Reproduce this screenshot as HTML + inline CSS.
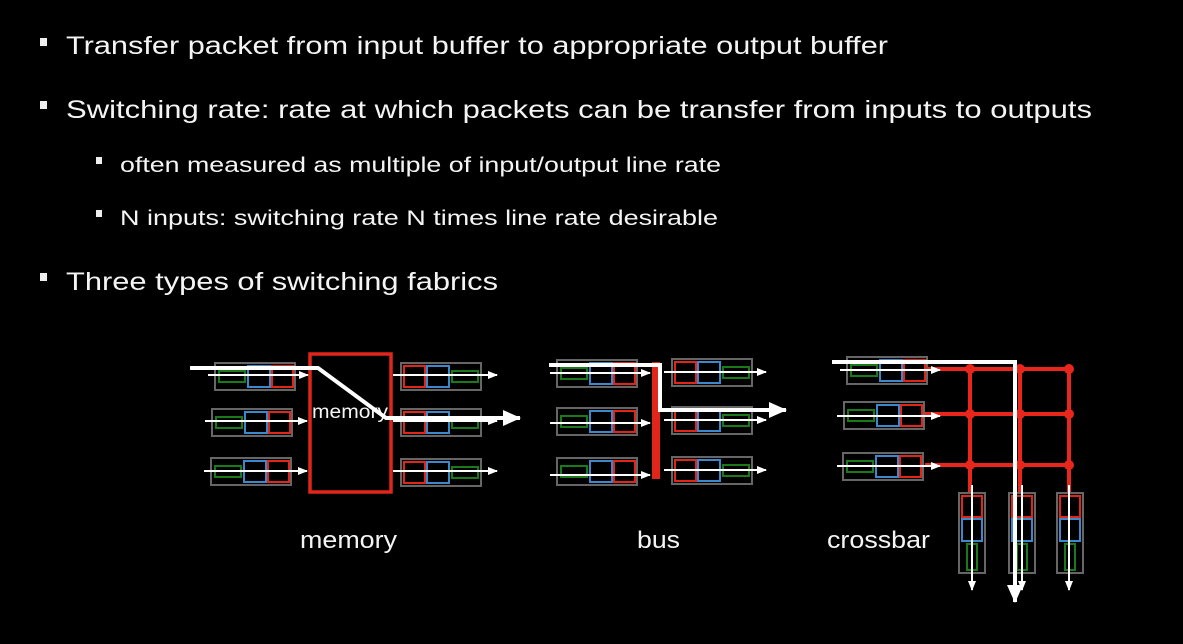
<!DOCTYPE html>
<html><head><meta charset="utf-8"><style>
html,body{margin:0;padding:0;background:#000;}
svg{display:block}
text{font-family:"Liberation Sans",sans-serif;fill:#f4f4f4}
</style></head><body>
<svg width="1183" height="644" viewBox="0 0 1183 644" xmlns="http://www.w3.org/2000/svg">
<defs>
<marker id="a" markerWidth="10" markerHeight="10" refX="9" refY="5" orient="auto" markerUnits="userSpaceOnUse"><path d="M0,1 L10,5 L0,9 Z" fill="#fff"/></marker>
<marker id="A" markerWidth="18" markerHeight="18" refX="17" refY="9" orient="auto" markerUnits="userSpaceOnUse"><path d="M0,1 L18,9 L0,17 Z" fill="#fff"/></marker>
<g id="qin">
<rect x="0" y="0" width="80" height="27" fill="none" stroke="#666" stroke-width="2"/>
<rect x="4" y="8" width="26" height="11" fill="none" stroke="#1a7a1a" stroke-width="2"/>
<rect x="33" y="3" width="22" height="21" fill="none" stroke="#3c88cc" stroke-width="2"/>
<rect x="57" y="3" width="21" height="21" fill="none" stroke="#e0261b" stroke-width="2"/>
</g>
<g id="qout">
<rect x="0" y="0" width="80" height="27" fill="none" stroke="#666" stroke-width="2"/>
<rect x="3" y="3" width="21" height="21" fill="none" stroke="#e0261b" stroke-width="2"/>
<rect x="26" y="3" width="22" height="21" fill="none" stroke="#3c88cc" stroke-width="2"/>
<rect x="51" y="8" width="26" height="11" fill="none" stroke="#1a7a1a" stroke-width="2"/>
</g>
<g id="qv">
<rect x="0" y="0" width="26" height="80" fill="none" stroke="#666" stroke-width="2"/>
<rect x="3" y="3" width="20" height="21" fill="none" stroke="#e0261b" stroke-width="2"/>
<rect x="3" y="26" width="20" height="22" fill="none" stroke="#3c88cc" stroke-width="2"/>
<rect x="8" y="51" width="10" height="26" fill="none" stroke="#1a7a1a" stroke-width="2"/>
</g>
</defs>

<rect x="40" y="38" width="7" height="8" fill="#eee"/>
<text x="66" y="54" font-size="25" textLength="822" lengthAdjust="spacingAndGlyphs">Transfer packet from input buffer to appropriate output buffer</text>
<rect x="40" y="101" width="7" height="8" fill="#eee"/>
<text x="66" y="118" font-size="25" textLength="1026" lengthAdjust="spacingAndGlyphs">Switching rate: rate at which packets can be transfer from inputs to outputs</text>
<rect x="96" y="157" width="6" height="7" fill="#eee"/>
<text x="120" y="172" font-size="21" textLength="601" lengthAdjust="spacingAndGlyphs">often measured as multiple of input/output line rate</text>
<rect x="96" y="210" width="6" height="7" fill="#eee"/>
<text x="120" y="225" font-size="21" textLength="598" lengthAdjust="spacingAndGlyphs">N inputs: switching rate N times line rate desirable</text>
<rect x="40" y="273" width="7" height="8" fill="#eee"/>
<text x="66" y="290" font-size="25" textLength="432" lengthAdjust="spacingAndGlyphs">Three types of switching fabrics</text>

<!-- memory -->
<use href="#qin" x="215" y="363"/>
<use href="#qin" x="212" y="409"/>
<use href="#qin" x="211" y="458"/>
<rect x="310" y="354" width="81" height="138" fill="none" stroke="#e0261b" stroke-width="3.5"/>
<text x="312" y="418" font-size="19" fill="#ddd" textLength="76" lengthAdjust="spacingAndGlyphs">memory</text>
<use href="#qout" x="401" y="363"/>
<use href="#qout" x="401" y="409"/>
<use href="#qout" x="401" y="459"/>
<g stroke="#fff" stroke-width="2" fill="none" marker-end="url(#a)">
<path d="M208,375 L308,375"/><path d="M205,421 L307,421"/><path d="M204,471 L307,471"/>
<path d="M393,375 L497,375"/><path d="M393,421 L497,421"/><path d="M393,471 L497,471"/>
</g>
<path d="M190,368 L318,368 L386,418 L520,418" stroke="#fff" stroke-width="4" fill="none" marker-end="url(#A)"/>
<text x="300" y="548" font-size="24" textLength="97" lengthAdjust="spacingAndGlyphs">memory</text>

<!-- bus -->
<use href="#qin" x="557" y="360"/>
<use href="#qin" x="557" y="408"/>
<use href="#qin" x="557" y="458"/>
<rect x="652" y="362" width="8" height="117" fill="#e0261b"/>
<use href="#qout" x="672" y="359"/>
<use href="#qout" x="672" y="407"/>
<use href="#qout" x="672" y="457"/>
<g stroke="#fff" stroke-width="2" fill="none" marker-end="url(#a)">
<path d="M550,373 L650,373"/><path d="M550,423 L650,423"/><path d="M550,475 L650,475"/>
<path d="M664,372 L766,372"/><path d="M664,420 L766,420"/><path d="M664,470 L766,470"/>
</g>
<path d="M549,365 L660,365 L660,410 L786,410" stroke="#fff" stroke-width="4" fill="none" marker-end="url(#A)"/>
<text x="637" y="548" font-size="24" textLength="43" lengthAdjust="spacingAndGlyphs">bus</text>

<!-- crossbar -->
<use href="#qin" x="847" y="357"/>
<use href="#qin" x="844" y="402"/>
<use href="#qin" x="843" y="453"/>
<g stroke="#e8261b" stroke-width="4" fill="none">
<path d="M925,369 L1070,369"/><path d="M925,414 L1070,414"/><path d="M925,465 L1070,465"/>
<path d="M970,369 L970,492"/><path d="M1020,369 L1020,492"/><path d="M1069,369 L1069,492"/>
</g>
<g fill="#e8261b">
<circle cx="970" cy="369" r="5"/><circle cx="1020" cy="369" r="5"/><circle cx="1069" cy="369" r="5"/>
<circle cx="970" cy="414" r="5"/><circle cx="1020" cy="414" r="5"/><circle cx="1069" cy="414" r="5"/>
<circle cx="970" cy="465" r="5"/><circle cx="1020" cy="465" r="5"/><circle cx="1069" cy="465" r="5"/>
</g>
<use href="#qv" x="959" y="493"/>
<use href="#qv" x="1009" y="493"/>
<use href="#qv" x="1057" y="493"/>
<g stroke="#fff" stroke-width="2" fill="none" marker-end="url(#a)">
<path d="M840,370 L940,370"/><path d="M837,416 L940,416"/><path d="M837,466 L940,466"/>
<path d="M972,485 L972,590"/><path d="M1022,485 L1022,590"/><path d="M1069,485 L1069,590"/>
</g>
<path d="M832,362 L1015,362 L1015,602" stroke="#fff" stroke-width="4" fill="none" marker-end="url(#A)"/>
<text x="827" y="548" font-size="24" textLength="103" lengthAdjust="spacingAndGlyphs">crossbar</text>
</svg>
</body></html>
